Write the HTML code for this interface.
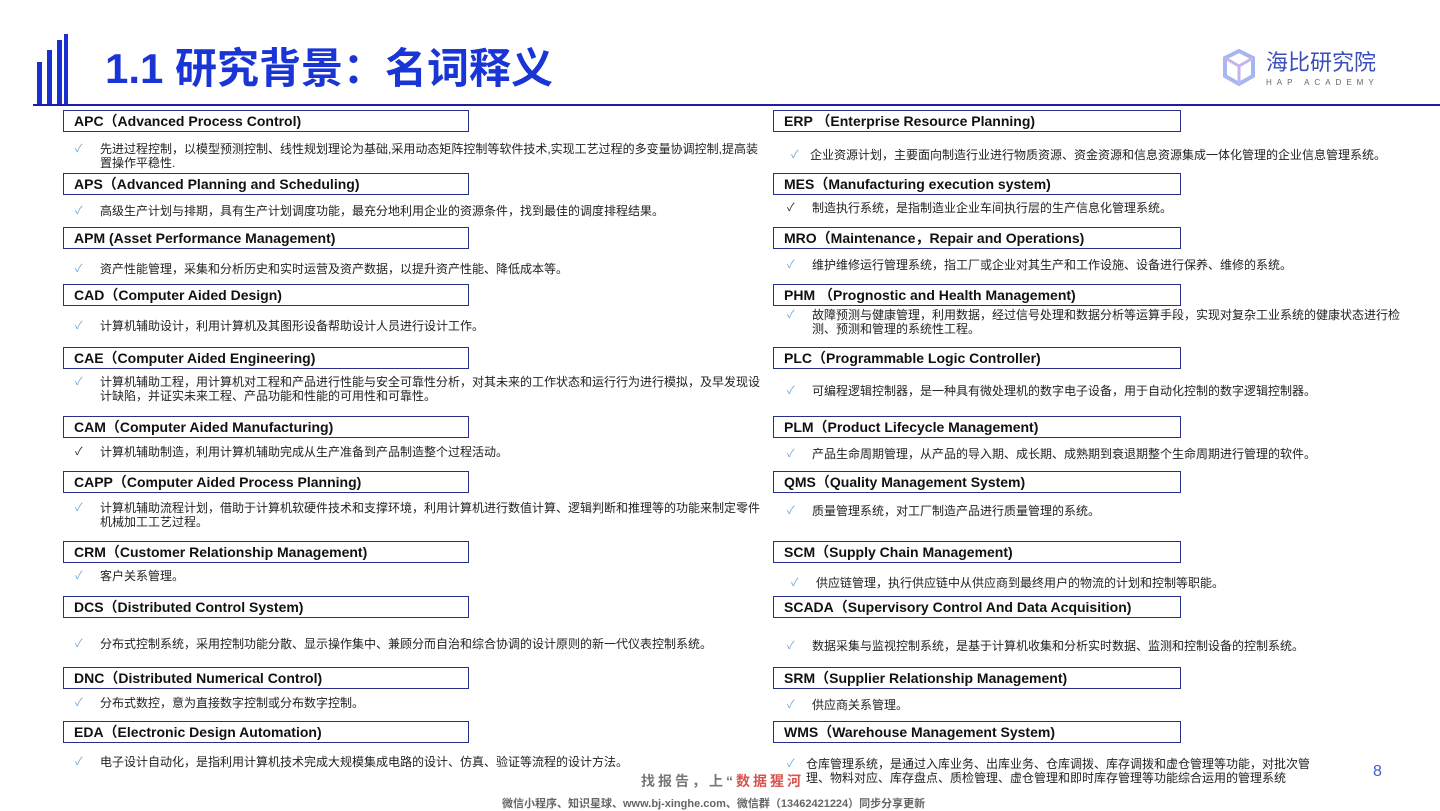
<!DOCTYPE html>
<html><head><meta charset="utf-8"><style>
body{margin:0;width:1440px;height:810px;background:#fff;position:relative;overflow:hidden;font-family:"Liberation Sans","Noto Sans CJK SC",sans-serif;}
.b{position:absolute;height:22px;border:1.5px solid #26308a;box-sizing:border-box;font-weight:bold;font-size:14px;line-height:20px;padding-left:10px;color:#111;white-space:nowrap}
.L{left:63px;width:406px}.R{left:773px;width:408px}
.d{position:absolute;font-size:12px;line-height:14px;color:#222;white-space:nowrap}
.c{position:absolute;font-size:11px;color:#6fa8dc;line-height:14px}
.k{color:#222}
</style></head><body>
<div style="position:absolute;left:37px;top:62px;width:5px;height:43px;background:#1a2fd0"></div>
<div style="position:absolute;left:47px;top:50px;width:5px;height:55px;background:#1a2fd0"></div>
<div style="position:absolute;left:57px;top:40px;width:5px;height:65px;background:#1a2fd0"></div>
<div style="position:absolute;left:64px;top:34px;width:4px;height:71px;background:#1a2fd0"></div>
<div style="position:absolute;left:33px;top:104px;width:1407px;height:2px;background:#1c1ca8"></div>
<div style="position:absolute;left:105px;top:41px;font-size:42px;font-weight:bold;color:#1a35d6;line-height:56px;font-family:'Liberation Sans','Noto Sans CJK SC',sans-serif">1.1 研究背景：名词释义</div>
<svg style="position:absolute;left:1222px;top:48px" width="34" height="40" viewBox="0 0 34 40"><path d="M3 10 L17 3 L31 10 L31 28 L17 36 L3 28 Z" fill="none" stroke="#a7b6f0" stroke-width="4"/><path d="M17 18 L17 36 M3 10 L17 18 L31 10" fill="none" stroke="#c6b4ec" stroke-width="3"/></svg>
<div style="position:absolute;left:1266px;top:50px;font-size:22px;color:#3a4fb8;line-height:26px">海比研究院</div>
<div style="position:absolute;left:1266px;top:78px;font-size:8px;letter-spacing:5px;color:#666">HAP ACADEMY</div>

<div class="b L" style="top:110px">APC（Advanced Process Control)</div>
<div class="c" style="left:75px;top:142px">✓</div><div class="d" style="left:100px;top:142px">先进过程控制，以模型预测控制、线性规划理论为基础,采用动态矩阵控制等软件技术,实现工艺过程的多变量协调控制,提高装<br>置操作平稳性.</div>
<div class="b L" style="top:173px">APS（Advanced Planning and Scheduling)</div>
<div class="c" style="left:75px;top:204px">✓</div><div class="d" style="left:100px;top:204px">高级生产计划与排期，具有生产计划调度功能，最充分地利用企业的资源条件，找到最佳的调度排程结果。</div>
<div class="b L" style="top:227px">APM (Asset Performance Management)</div>
<div class="c" style="left:75px;top:262px">✓</div><div class="d" style="left:100px;top:262px">资产性能管理，采集和分析历史和实时运营及资产数据，以提升资产性能、降低成本等。</div>
<div class="b L" style="top:284px">CAD（Computer Aided Design)</div>
<div class="c" style="left:75px;top:319px">✓</div><div class="d" style="left:100px;top:319px">计算机辅助设计，利用计算机及其图形设备帮助设计人员进行设计工作。</div>
<div class="b L" style="top:347px">CAE（Computer Aided Engineering)</div>
<div class="c" style="left:75px;top:375px">✓</div><div class="d" style="left:100px;top:375px">计算机辅助工程，用计算机对工程和产品进行性能与安全可靠性分析，对其未来的工作状态和运行行为进行模拟，及早发现设<br>计缺陷，并证实未来工程、产品功能和性能的可用性和可靠性。</div>
<div class="b L" style="top:416px">CAM（Computer Aided Manufacturing)</div>
<div class="c k" style="left:75px;top:445px">✓</div><div class="d" style="left:100px;top:445px">计算机辅助制造，利用计算机辅助完成从生产准备到产品制造整个过程活动。</div>
<div class="b L" style="top:471px">CAPP（Computer Aided Process Planning)</div>
<div class="c" style="left:75px;top:501px">✓</div><div class="d" style="left:100px;top:501px">计算机辅助流程计划，借助于计算机软硬件技术和支撑环境，利用计算机进行数值计算、逻辑判断和推理等的功能来制定零件<br>机械加工工艺过程。</div>
<div class="b L" style="top:541px">CRM（Customer Relationship Management)</div>
<div class="c" style="left:75px;top:569px">✓</div><div class="d" style="left:100px;top:569px">客户关系管理。</div>
<div class="b L" style="top:596px">DCS（Distributed Control System)</div>
<div class="c" style="left:75px;top:637px">✓</div><div class="d" style="left:100px;top:637px">分布式控制系统，采用控制功能分散、显示操作集中、兼顾分而自治和综合协调的设计原则的新一代仪表控制系统。</div>
<div class="b L" style="top:667px">DNC（Distributed Numerical Control)</div>
<div class="c" style="left:75px;top:696px">✓</div><div class="d" style="left:100px;top:696px">分布式数控，意为直接数字控制或分布数字控制。</div>
<div class="b L" style="top:721px">EDA（Electronic Design Automation)</div>
<div class="c" style="left:75px;top:755px">✓</div><div class="d" style="left:100px;top:755px">电子设计自动化，是指利用计算机技术完成大规模集成电路的设计、仿真、验证等流程的设计方法。</div>

<div class="b R" style="top:110px">ERP （Enterprise Resource Planning)</div>
<div class="c" style="left:791px;top:148px">✓</div><div class="d" style="left:810px;top:148px">企业资源计划，主要面向制造行业进行物质资源、资金资源和信息资源集成一体化管理的企业信息管理系统。</div>
<div class="b R" style="top:173px">MES（Manufacturing execution system)</div>
<div class="c k" style="left:787px;top:201px">✓</div><div class="d" style="left:812px;top:201px">制造执行系统，是指制造业企业车间执行层的生产信息化管理系统。</div>
<div class="b R" style="top:227px">MRO（Maintenance，Repair and Operations)</div>
<div class="c" style="left:787px;top:258px">✓</div><div class="d" style="left:812px;top:258px">维护维修运行管理系统，指工厂或企业对其生产和工作设施、设备进行保养、维修的系统。</div>
<div class="b R" style="top:284px">PHM （Prognostic and Health Management)</div>
<div class="c" style="left:787px;top:308px">✓</div><div class="d" style="left:812px;top:308px">故障预测与健康管理，利用数据，经过信号处理和数据分析等运算手段，实现对复杂工业系统的健康状态进行检<br>测、预测和管理的系统性工程。</div>
<div class="b R" style="top:347px">PLC（Programmable Logic Controller)</div>
<div class="c" style="left:787px;top:384px">✓</div><div class="d" style="left:812px;top:384px">可编程逻辑控制器，是一种具有微处理机的数字电子设备，用于自动化控制的数字逻辑控制器。</div>
<div class="b R" style="top:416px">PLM（Product Lifecycle Management)</div>
<div class="c" style="left:787px;top:447px">✓</div><div class="d" style="left:812px;top:447px">产品生命周期管理，从产品的导入期、成长期、成熟期到衰退期整个生命周期进行管理的软件。</div>
<div class="b R" style="top:471px">QMS（Quality Management System)</div>
<div class="c" style="left:787px;top:504px">✓</div><div class="d" style="left:812px;top:504px">质量管理系统，对工厂制造产品进行质量管理的系统。</div>
<div class="b R" style="top:541px">SCM（Supply Chain Management)</div>
<div class="c" style="left:791px;top:576px">✓</div><div class="d" style="left:816px;top:576px">供应链管理，执行供应链中从供应商到最终用户的物流的计划和控制等职能。</div>
<div class="b R" style="top:596px">SCADA（Supervisory Control And Data Acquisition)</div>
<div class="c" style="left:787px;top:639px">✓</div><div class="d" style="left:812px;top:639px">数据采集与监视控制系统，是基于计算机收集和分析实时数据、监测和控制设备的控制系统。</div>
<div class="b R" style="top:667px">SRM（Supplier Relationship Management)</div>
<div class="c" style="left:787px;top:698px">✓</div><div class="d" style="left:812px;top:698px">供应商关系管理。</div>
<div class="b R" style="top:721px">WMS（Warehouse Management System)</div>
<div class="c" style="left:787px;top:757px">✓</div><div class="d" style="left:806px;top:757px">仓库管理系统，是通过入库业务、出库业务、仓库调拨、库存调拨和虚仓管理等功能，对批次管<br>理、物料对应、库存盘点、质检管理、虚仓管理和即时库存管理等功能综合运用的管理系统</div>

<div style="position:absolute;left:641px;top:771px;font-size:14px;font-weight:bold;color:#777;letter-spacing:3px;background:#fff">找报告，上“<span style="color:#d9534f">数据猩河</span></div>
<div style="position:absolute;left:502px;top:795px;font-size:11px;color:#666;font-weight:bold">微信小程序、知识星球、www.bj-xinghe.com、微信群（13462421224）同步分享更新</div>
<div style="position:absolute;left:1373px;top:763px;font-size:16px;color:#3a5fcd">8</div>
</body></html>
